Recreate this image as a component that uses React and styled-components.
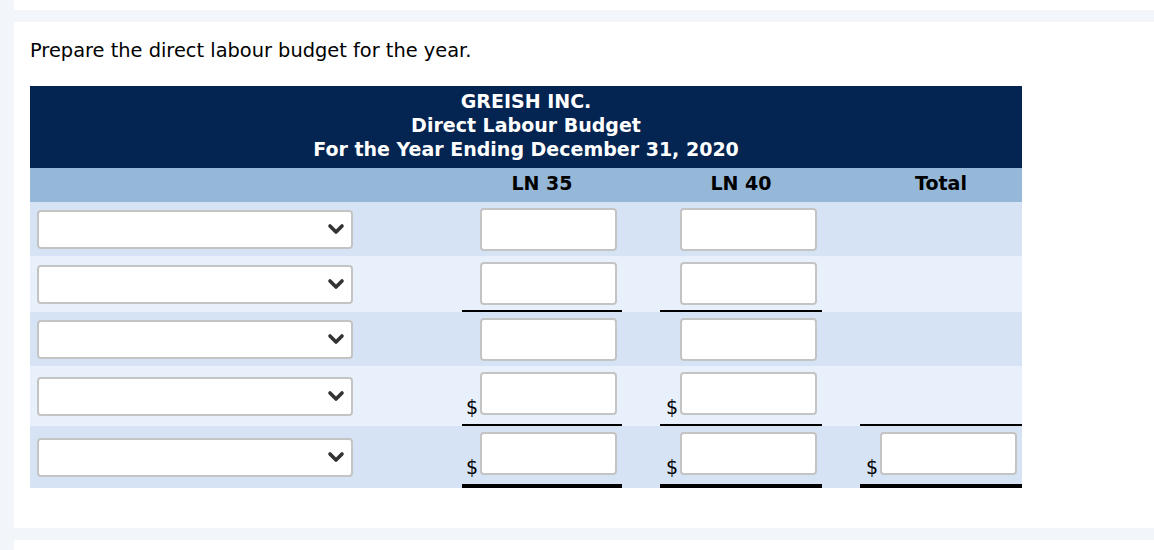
import React from "react";
import styled, { createGlobalStyle } from "styled-components";

const Global = createGlobalStyle`
  html, body { margin: 0; padding: 0; background: #f2f5f9; }
  body { font-family: "DejaVu Sans", Verdana, sans-serif; color: #000; }
`;

const Page = styled.div`
  padding-left: 14px;
  display: flex;
  flex-direction: column;
  gap: 12px;
  width: 1140px;
`;

const Strip = styled.div`
  background: #fff;
  height: ${(p) => p.$h}px;
`;

const Card = styled.div`
  background: #fff;
  height: 506px;
  box-sizing: border-box;
  padding: 18px 0 0 16px;
`;

const Prompt = styled.p`
  margin: 0 0 24px 0;
  font-size: 19.4px;
  line-height: 22px;
  height: 22px;
`;

const Table = styled.div`
  width: 992px;
`;

const TitleBlock = styled.div`
  background: #042452;
  color: #fff;
  font-weight: bold;
  font-size: 19px;
  line-height: 24px;
  text-align: center;
  padding: 3px 0 7px;
`;

const Grid = styled.div`
  display: grid;
  grid-template-columns: 432px 160px 38px 162px 38px 162px;
`;

const ColHead = styled.div`
  background: #95b8d8;
  height: 34px;
  line-height: 30px;
  text-align: center;
  font-weight: bold;
  font-size: 19px;
`;

const Cell = styled.div`
  background: ${(p) => (p.$alt ? "#e8f0fc" : "#d6e3f5")};
  height: ${(p) => p.$h}px;
  border-bottom: ${(p) => (p.$rule ? `${p.$rule}px solid #000` : "none")};
`;

const SelectCell = styled(Cell)`
  display: flex;
  align-items: center;
  padding-left: 7px;
`;

const SelectBox = styled.div`
  width: 316px;
  height: 39px;
  box-sizing: border-box;
  border: 2px solid #c4c4c4;
  border-radius: 4px;
  background: #fff;
  display: flex;
  align-items: center;
  justify-content: flex-end;
  padding-right: 6px;
`;

const AmountCell = styled(Cell)`
  display: flex;
  justify-content: flex-end;
  align-items: flex-start;
  padding: 6px 5px 0 0;
  box-sizing: content-box;
`;

const Amount = styled.div`
  display: flex;
  align-items: flex-end;
  gap: 2px;
`;

const Dollar = styled.span`
  font-size: 19px;
  line-height: 19px;
  margin-bottom: -2px;
`;

const InputBox = styled.div`
  width: 137px;
  height: 43px;
  box-sizing: border-box;
  border: 2px solid #c4c4c4;
  border-radius: 4px;
  background: #fff;
`;

const Chevron = () => (
  <svg width="18" height="13" viewBox="0 0 18 13">
    <polyline
      points="3,3 9,9 15,3"
      fill="none"
      stroke="#333"
      strokeWidth="3.6"
      strokeLinecap="round"
      strokeLinejoin="round"
    />
  </svg>
);

const rows = [
  { h: 54, cols: [{ in: true }, { in: true }, {}] },
  { h: 54, cols: [{ in: true, rule: 2 }, { in: true, rule: 2 }, {}] },
  { h: 54, cols: [{ in: true }, { in: true }, {}] },
  { h: 58, cols: [{ in: true, d: true, rule: 2 }, { in: true, d: true, rule: 2 }, { rule: 2 }] },
  { h: 58, cols: [{ in: true, d: true, rule: 4 }, { in: true, d: true, rule: 4 }, { in: true, d: true, rule: 4 }] },
];

const Amt = ({ c, h, alt, rowRule }) => {
  const inner = h + (rowRule || 0) - (c.rule || 0) - 6;
  return (
    <AmountCell $alt={alt} $h={inner} $rule={c.rule}>
      {c.in && (
        <Amount>
          {c.d && <Dollar>$</Dollar>}
          <InputBox />
        </Amount>
      )}
    </AmountCell>
  );
};

export default function App() {
  return (
    <>
      <Global />
      <Page>
        <Strip $h={10} />
        <Card>
          <Prompt>Prepare the direct labour budget for the year.</Prompt>
          <Table>
            <TitleBlock>
              <div>GREISH INC.</div>
              <div>Direct Labour Budget</div>
              <div>For the Year Ending December 31, 2020</div>
            </TitleBlock>
            <Grid>
              <ColHead />
              <ColHead>LN 35</ColHead>
              <ColHead />
              <ColHead>LN 40</ColHead>
              <ColHead />
              <ColHead>Total</ColHead>
              {rows.map((r, i) => {
                const alt = i % 2 === 1;
                const rr = r.cols[0].rule || 0;
                const full = r.h + rr;
                return (
                  <React.Fragment key={i}>
                    <SelectCell $alt={alt} $h={full}>
                      <SelectBox>
                        <Chevron />
                      </SelectBox>
                    </SelectCell>
                    <Amt c={r.cols[0]} h={r.h} alt={alt} rowRule={rr} />
                    <Cell $alt={alt} $h={full} />
                    <Amt c={r.cols[1]} h={r.h} alt={alt} rowRule={rr} />
                    <Cell $alt={alt} $h={full} />
                    <Amt c={r.cols[2]} h={r.h} alt={alt} rowRule={rr} />
                  </React.Fragment>
                );
              })}
            </Grid>
          </Table>
        </Card>
        <Strip $h={20} />
      </Page>
    </>
  );
}
